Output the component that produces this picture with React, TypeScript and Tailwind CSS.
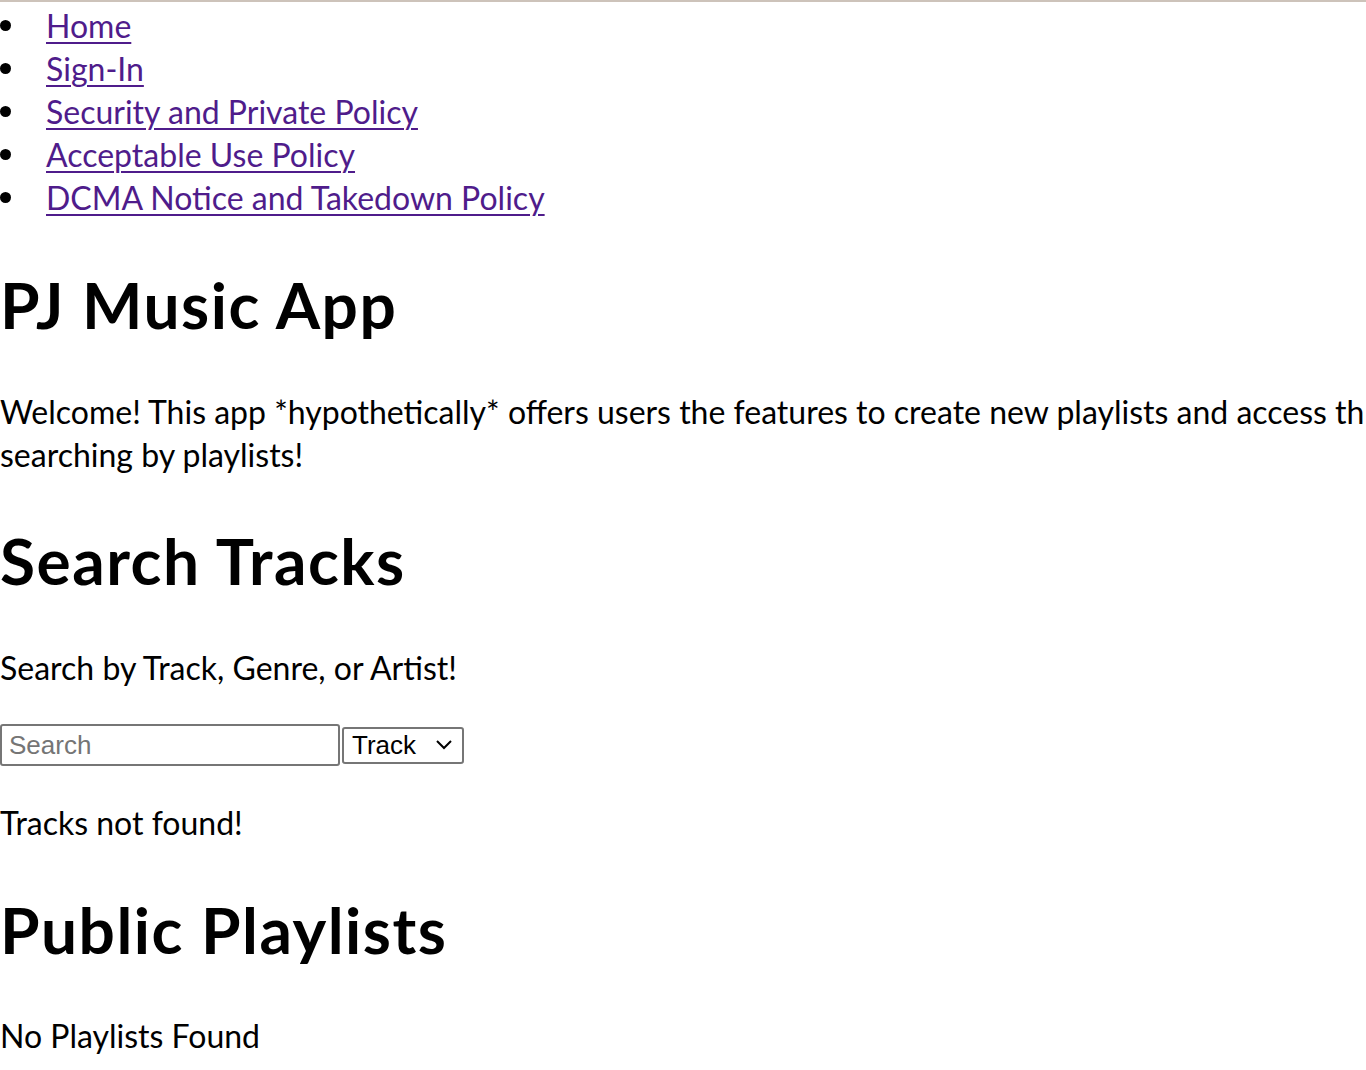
import React from "react";

const links = [
  "Home",
  "Sign-In",
  "Security and Private Policy",
  "Acceptable Use Policy",
  "DCMA Notice and Takedown Policy",
];

export default function App() {
  return (
    <div
      className="w-[1366px] h-[1070px] overflow-hidden bg-white text-black border-t-2 border-[#cdc3ba]"
      style={{ fontFamily: "Lato, 'Open Sans', sans-serif" }}
    >
      <ul className="pt-[2px] m-0 p-0">
        {links.map((l) => (
          <li key={l} className="flex items-center h-[43px] text-[32px]">
            <span className="w-[11px] h-[11px] rounded-full bg-black ml-[0px] mr-[35px]" />
            <a href="#" className="text-[#4f1c8b] underline decoration-[2px] underline-offset-[4px]">
              {l}
            </a>
          </li>
        ))}
      </ul>
      <h1 className="mt-[43px] text-[64px] font-bold leading-[86px] tracking-[1.5px]">PJ Music App</h1>
      <p className="mt-[42px] text-[32px] leading-[43px] whitespace-nowrap">
        Welcome! This app *hypothetically* offers users the features to create new playlists and access th
        <br />
        searching by playlists!
      </p>
      <h1 className="mt-[42px] text-[64px] font-bold leading-[86px] tracking-[1.5px]">Search Tracks</h1>
      <p className="mt-[42px] text-[32px] leading-[43px]">Search by Track, Genre, or Artist!</p>
      <div className="mt-[35px] flex items-center gap-[2px]">
        <input
          placeholder="Search"
          className="w-[340px] h-[42px] border-2 border-[#767676] rounded-[3px] px-[7px] text-[26px] placeholder-[#757575] outline-none"
          style={{ fontFamily: "'Liberation Sans', Arial, sans-serif" }}
        />
        <div
          className="w-[122px] h-[37px] border-2 border-[#767676] rounded-[3px] flex items-center justify-between pl-[8px] pr-[10px] text-[26px]"
          style={{ fontFamily: "'Liberation Sans', Arial, sans-serif" }}
        >
          <span>Track</span>
          <svg width="16" height="10" viewBox="0 0 16 10" fill="none" stroke="black" strokeWidth="2">
            <path d="M1 1l7 7 7-7" />
          </svg>
        </div>
      </div>
      <p className="mt-[35px] text-[32px] leading-[43px]">Tracks not found!</p>
      <h1 className="mt-[43px] text-[64px] font-bold leading-[86px] tracking-[1.5px]">Public Playlists</h1>
      <p className="mt-[41px] text-[32px] leading-[43px]">No Playlists Found</p>
    </div>
  );
}
